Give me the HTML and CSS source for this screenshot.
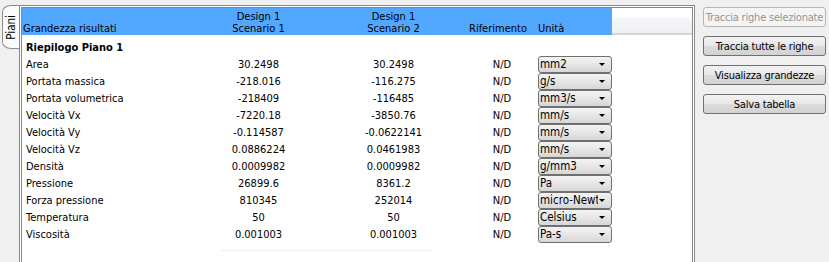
FILE: index.html
```html
<!DOCTYPE html>
<html>
  <head>
    <title>Risultati piani</title>
    <link rel="stylesheet" href="styles.css">
  </head>
  <body>
    <div class="window">
      <div class="tabs">
        <div class="tab"><span>Piani</span></div>
      </div>
      <div class="panel">
        <div class="head">
          <div class="hcell c-name">Grandezza risultati</div>
          <div class="hcell c-val">Design 1<br />Scenario 1</div>
          <div class="hcell c-val">Design 1<br />Scenario 2</div>
          <div class="hcell c-ref">Riferimento</div>
          <div class="hcell c-unit">Unità</div>
          <div class="hfill"></div>
        </div>
        <div class="rows">
          <div class="row group"><div class="c-name">Riepilogo Piano 1</div></div>
          <div class="row">
            <div class="c-name">Area</div>
            <div class="c-val">30.2498</div>
            <div class="c-val">30.2498</div>
            <div class="c-ref">N/D</div>
            <div class="c-unit"><div class="combo"><span>mm2</span></div></div>
          </div>
          <div class="row">
            <div class="c-name">Portata massica</div>
            <div class="c-val">-218.016</div>
            <div class="c-val">-116.275</div>
            <div class="c-ref">N/D</div>
            <div class="c-unit"><div class="combo"><span>g/s</span></div></div>
          </div>
          <div class="row">
            <div class="c-name">Portata volumetrica</div>
            <div class="c-val">-218409</div>
            <div class="c-val">-116485</div>
            <div class="c-ref">N/D</div>
            <div class="c-unit"><div class="combo"><span>mm3/s</span></div></div>
          </div>
          <div class="row">
            <div class="c-name">Velocità Vx</div>
            <div class="c-val">-7220.18</div>
            <div class="c-val">-3850.76</div>
            <div class="c-ref">N/D</div>
            <div class="c-unit"><div class="combo"><span>mm/s</span></div></div>
          </div>
          <div class="row">
            <div class="c-name">Velocità Vy</div>
            <div class="c-val">-0.114587</div>
            <div class="c-val">-0.0622141</div>
            <div class="c-ref">N/D</div>
            <div class="c-unit"><div class="combo"><span>mm/s</span></div></div>
          </div>
          <div class="row">
            <div class="c-name">Velocità Vz</div>
            <div class="c-val">0.0886224</div>
            <div class="c-val">0.0461983</div>
            <div class="c-ref">N/D</div>
            <div class="c-unit"><div class="combo"><span>mm/s</span></div></div>
          </div>
          <div class="row">
            <div class="c-name">Densità</div>
            <div class="c-val">0.0009982</div>
            <div class="c-val">0.0009982</div>
            <div class="c-ref">N/D</div>
            <div class="c-unit"><div class="combo"><span>g/mm3</span></div></div>
          </div>
          <div class="row">
            <div class="c-name">Pressione</div>
            <div class="c-val">26899.6</div>
            <div class="c-val">8361.2</div>
            <div class="c-ref">N/D</div>
            <div class="c-unit"><div class="combo"><span>Pa</span></div></div>
          </div>
          <div class="row">
            <div class="c-name">Forza pressione</div>
            <div class="c-val">810345</div>
            <div class="c-val">252014</div>
            <div class="c-ref">N/D</div>
            <div class="c-unit"><div class="combo"><span>micro-Newton</span></div></div>
          </div>
          <div class="row">
            <div class="c-name">Temperatura</div>
            <div class="c-val">50</div>
            <div class="c-val">50</div>
            <div class="c-ref">N/D</div>
            <div class="c-unit"><div class="combo"><span>Celsius</span></div></div>
          </div>
          <div class="row">
            <div class="c-name">Viscosità</div>
            <div class="c-val">0.001003</div>
            <div class="c-val">0.001003</div>
            <div class="c-ref">N/D</div>
            <div class="c-unit"><div class="combo"><span>Pa-s</span></div></div>
          </div>
        </div>
        <div class="foot-line"></div>
      </div>
      <div class="actions">
        <button class="btn" disabled>Traccia righe selezionate</button>
        <button class="btn">Traccia tutte le righe</button>
        <button class="btn">Visualizza grandezze</button>
        <button class="btn">Salva tabella</button>
      </div>
    </div>
  </body>
</html>
```

FILE: styles.css
```css
/* Windows-like results table */
html,
body {
  height: 262px;
}
body {
  margin: 0;
  background-color: #f0f0f0;
  color: #000;
  font-family: "DejaVu Sans Condensed", "Liberation Sans", sans-serif;
  font-size: 11px;
  overflow: hidden;
}
.window {
  display: flex;
  padding-top: 5px;
  height: 257px;
}
.tabs {
  width: 17px;
  padding-left: 2px;
}
.tab {
  width: 16px;
  height: 42px;
  border: 1px solid #8c8c8c;
  border-right: none;
  border-radius: 9px 0 0 9px / 7px 0 0 7px;
  background-color: #fbfbfb;
  display: flex;
  align-items: center;
  justify-content: center;
}
.tab span {
  writing-mode: vertical-rl;
  transform: rotate(180deg);
  line-height: 12px;
  font-size: 11.5px;
}
.panel {
  width: 670px;
  height: 254px;
  border: 3px double #888;
  border-bottom: none;
  background-color: #fff;
}
.head {
  display: flex;
  height: 27px;
}
.hcell {
  background-color: #52a8ff;
  display: flex;
  flex-direction: column;
  justify-content: flex-end;
  line-height: 12px;
  padding-bottom: 0;
  box-sizing: border-box;
}
.hfill {
  flex: 1;
  margin-top: 9px;
  background: linear-gradient(#f6f7f9, #eeeff2);
  border-bottom: 2px solid #d6d6d6;
}
.c-name {
  width: 169px;
  box-sizing: border-box;
  padding-left: 4px;
}
.hcell.c-name {
  padding-left: 1px;
}
.c-val {
  width: 135px;
  text-align: center;
}
.c-ref {
  width: 74px;
  text-align: center;
  padding-left: 8px;
  box-sizing: border-box;
}
.hcell.c-ref {
  padding-left: 0;
}
.c-unit {
  width: 77px;
  padding-left: 3px;
  box-sizing: border-box;
}
.rows {
  margin-top: 4px;
}
.row {
  display: flex;
  height: 17px;
  line-height: 17px;
  white-space: nowrap;
}
.group {
  font-weight: bold;
}
.group .c-name {
  width: auto;
}
.combo {
  position: relative;
  width: 74px;
  height: 17px;
  box-sizing: border-box;
  border: 1px solid #707070;
  border-radius: 3px;
  background: linear-gradient(#f4f4f4, #e6e6e6 50%, #d6d6d6);
  line-height: 15px;
  padding-left: 1px;
  font-size: 11.5px;
}
.combo span {
  display: block;
  width: 58px;
  overflow: hidden;
}
.combo::after {
  content: "";
  position: absolute;
  right: 6px;
  top: 6px;
  border-left: 3px solid transparent;
  border-right: 3px solid transparent;
  border-top: 3px solid #000;
}
.foot-line {
  margin: 7px 0 0 199px;
  width: 210px;
  height: 1px;
  background-color: #eceef4;
}
.actions {
  display: flex;
  flex-direction: column;
  gap: 9px;
  margin-left: 8px;
  padding-top: 2px;
}
.btn {
  width: 123px;
  height: 20px;
  padding: 0;
  border: 1px solid #707070;
  border-radius: 3px;
  background: linear-gradient(#f2f2f2, #e8e8e8 50%, #dcdcdc 51%, #d2d2d2);
  font-family: inherit;
  font-size: 11px;
  letter-spacing: -0.2px;
  white-space: nowrap;
  color: #000;
}
.btn:disabled {
  border-color: #b5b5b5;
  background: #f4f4f4;
  color: #949494;
}
```
